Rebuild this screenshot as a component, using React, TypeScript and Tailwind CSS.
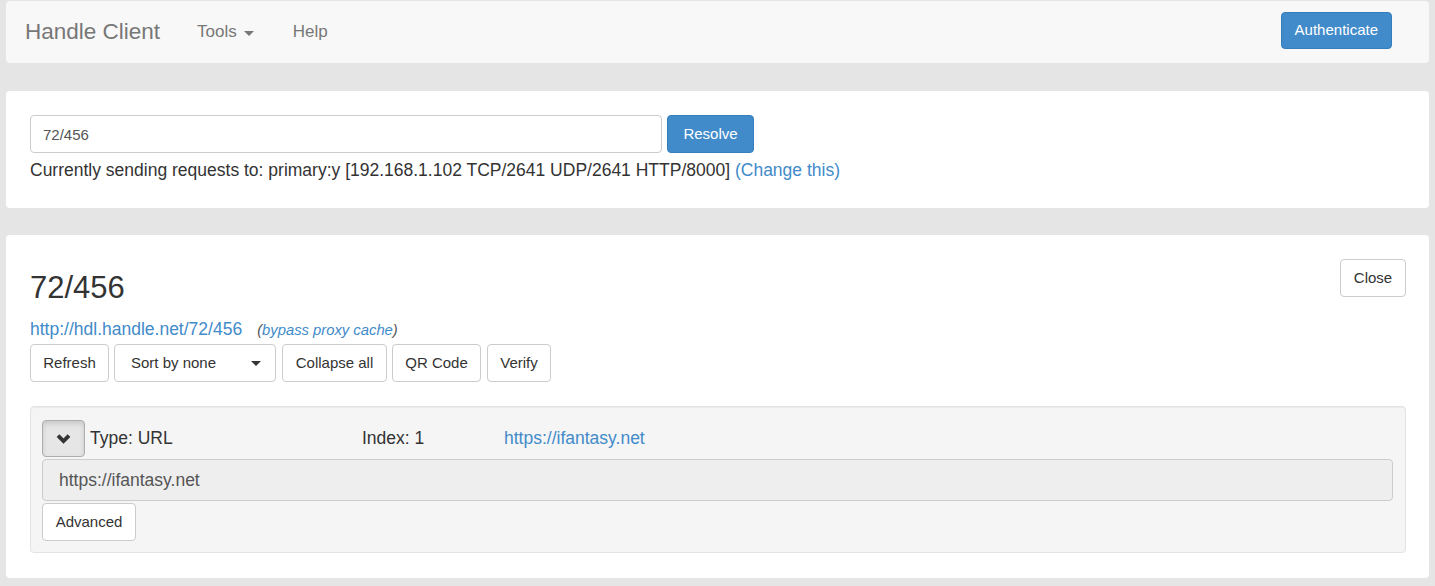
function Caret({ className }: { className?: string }) {
  return (
    <span
      className={`inline-block h-0 w-0 border-x-[5px] border-t-[5px] border-x-transparent border-t-current ${className ?? ''}`}
    />
  );
}

function ChevronDown() {
  return (
    <svg width="15" height="11" viewBox="0 0 15 11" className="text-[#333]">
      <path d="M2 2.6 L7.5 8 L13 2.6" fill="none" stroke="currentColor" strokeWidth="3.8" strokeLinejoin="miter" />
    </svg>
  );
}

const btn =
  'inline-flex h-[38px] items-center justify-center whitespace-nowrap rounded border border-[#ccc] bg-white text-[15px] text-[#333]';

export default function App() {
  return (
    <div className="min-h-screen bg-[#e5e5e5] px-[6px] pt-px pb-2 text-[17.5px] text-[#333] [font-family:'Liberation_Sans',Arial,sans-serif]">
      {/* Navbar */}
      <nav className="flex h-[62px] items-center rounded bg-[#f8f8f8] pl-[19px] pr-[37px]">
        <span className="text-[22.5px] text-[#777]">Handle Client</span>
        <a className="ml-[37px] flex items-center gap-[7px] text-[17px] text-[#777]">
          Tools <Caret className="mt-[2px]" />
        </a>
        <a className="ml-[39px] text-[17px] text-[#777]">Help</a>
        <button className="mb-[3px] ml-auto h-[37px] rounded border border-[#357ebd] bg-[#428bca] px-[13px] text-[15px] text-white">
          Authenticate
        </button>
      </nav>

      {/* Resolve form */}
      <div className="mt-[28px] rounded bg-white px-6 pt-6 pb-[25px]">
        <div className="flex gap-[5px]">
          <input
            readOnly
            value="72/456"
            className="h-[38px] w-[632px] rounded border border-[#ccc] px-[12px] text-[15px] text-[#555] outline-none"
          />
          <button className="h-[38px] w-[87px] rounded border border-[#357ebd] bg-[#428bca] text-[15px] text-white">
            Resolve
          </button>
        </div>
        <p className="mt-[5px] leading-[25px]">
          Currently sending requests to: primary:y [192.168.1.102 TCP/2641 UDP/2641 HTTP/8000]{' '}
          <a className="text-[#428bca]">(Change this)</a>
        </p>
      </div>

      {/* Handle record */}
      <div className="mt-[27px] rounded bg-white pt-6 pr-[23px] pb-[25px] pl-6">
        <div className="flex items-start justify-between">
          <h2 className="mt-[12px] text-[31px] leading-[34px]">72/456</h2>
          <button className="h-[38px] w-[66px] rounded border border-[#ccc] bg-white text-[15px] text-[#333]">
            Close
          </button>
        </div>
        <div className="mt-[12px] leading-[25px]">
          <a className="text-[#428bca]">http://hdl.handle.net/72/456</a>
          <span className="ml-[15px] text-[14.8px] italic text-[#555]">
            (<a className="text-[#428bca]">bypass proxy cache</a>)
          </span>
        </div>
        <div className="mt-px flex">
          <button className={`${btn} w-[79px]`}>Refresh</button>
          <button className={`${btn} ml-[5px] w-[162px] !justify-between pl-[16px] pr-[14px]`}>
            Sort by none <Caret />
          </button>
          <button className={`${btn} ml-[6px] w-[105px]`}>Collapse all</button>
          <button className={`${btn} ml-[5px] w-[89px]`}>QR Code</button>
          <button className={`${btn} ml-[6px] w-[64px]`}>Verify</button>
        </div>

        {/* Value well */}
        <div className="mt-[24px] rounded border border-[#e3e3e3] bg-[#f5f5f5] pt-[13px] pr-[12px] pb-[11px] pl-[11px] shadow-[inset_0_1px_1px_rgba(0,0,0,0.05)]">
          <div className="flex items-center">
            <button className="flex h-[37px] w-[43px] items-center justify-center rounded border border-[#adadad] bg-[#e6e6e6] shadow-[inset_0_3px_5px_rgba(0,0,0,0.125)]">
              <ChevronDown />
            </button>
            <span className="ml-[5px] w-[272px]">Type: URL</span>
            <span className="w-[142px]">Index: 1</span>
            <a className="text-[#428bca]">https://ifantasy.net</a>
          </div>
          <div className="mt-[2px] flex h-[42px] items-center rounded border border-[#ccc] bg-[#eee] px-[16px] text-[#555]">
            https://ifantasy.net
          </div>
          <button className={`${btn} mt-[2px] h-[37px] w-[94px]`}>Advanced</button>
        </div>
      </div>
    </div>
  );
}
